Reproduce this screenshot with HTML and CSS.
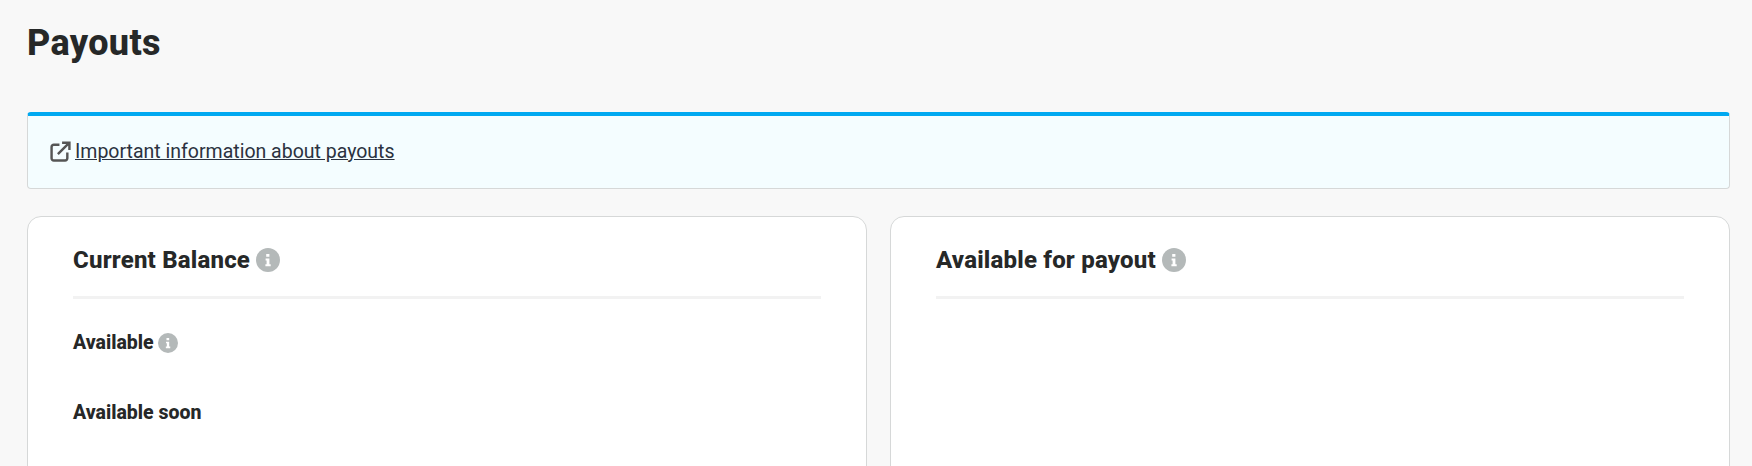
FILE: index.html
```html
<!DOCTYPE html>
<html lang="en">
<head>
    <meta charset="UTF-8">
    <meta name="viewport" content="width=device-width, initial-scale=1.0">
    <title>Payouts</title>
    <link rel="stylesheet" href="styles.css">
</head>
<body>
    <div class="page">
        <h1 class="page-title">Payouts</h1>
        <div class="notice">
            <svg class="external-icon" viewBox="0 0 20 20" width="21" height="21" fill="none" stroke="#555" stroke-width="2.3">
                <path d="M9 3.5H3.6A2.1 2.1 0 0 0 1.5 5.6v10.8a2.1 2.1 0 0 0 2.1 2.1h10.8a2.1 2.1 0 0 0 2.1-2.1V11"/>
                <path d="M7.5 12.5L18 2M11.5 1.6h7v7"/>
            </svg>
            <a class="notice-link" href="#">Important information about payouts</a>
        </div>
        <div class="cards">
            <section class="card">
                <div class="card-header">
                    <h2 class="card-title">Current Balance</h2>
                    <svg class="info-icon" viewBox="0 0 24 24" width="24" height="24">
                        <circle cx="12" cy="12" r="12" fill="#b4b9b9"/>
                        <path d="M10.2 6h3.2v2.8h-3.2zM9.6 10.4h3.8v5.8h1.3v2H9.4v-2h1.2v-3.8h-1z" fill="#fff"/>
                    </svg>
                </div>
                <div class="balance-row">
                    <span class="balance-label">Available</span>
                    <svg class="info-icon small" viewBox="0 0 24 24" width="20" height="20">
                        <circle cx="12" cy="12" r="12" fill="#b4b9b9"/>
                        <path d="M10.2 6h3.2v2.8h-3.2zM9.6 10.4h3.8v5.8h1.3v2H9.4v-2h1.2v-3.8h-1z" fill="#fff"/>
                    </svg>
                </div>
                <div class="balance-row">
                    <span class="balance-label">Available soon</span>
                </div>
            </section>
            <section class="card">
                <div class="card-header">
                    <h2 class="card-title">Available for payout</h2>
                    <svg class="info-icon" viewBox="0 0 24 24" width="24" height="24">
                        <circle cx="12" cy="12" r="12" fill="#b4b9b9"/>
                        <path d="M10.2 6h3.2v2.8h-3.2zM9.6 10.4h3.8v5.8h1.3v2H9.4v-2h1.2v-3.8h-1z" fill="#fff"/>
                    </svg>
                </div>
            </section>
        </div>
    </div>
</body>
</html>
```

FILE: styles.css
```css
html, body {
    height: 100%;
}

body {
    font-family: Roboto, "Liberation Sans", sans-serif;
    background-color: #f8f8f8;
    color: #262828;
    margin: 0;
    overflow: hidden;
}

.page {
    padding: 0 22px 0 27px;
    height: 466px;
    overflow: hidden;
}

.page-title {
    font-size: 36px;
    font-weight: 800;
    line-height: 42px;
    letter-spacing: 0.35px;
    margin: 0;
    padding: 22px 0 48px;
}

.notice {
    display: flex;
    align-items: center;
    gap: 4px;
    height: 77px;
    box-sizing: border-box;
    padding: 0 23px 1px 22px;
    background-color: #f4fdff;
    border: 1px solid #d6d8d8;
    border-top: 4px solid #00a9f1;
    border-radius: 4px;
}

.notice-link {
    color: #2b3240;
    font-size: 19.5px;
    line-height: 24px;
    text-decoration: underline;
}

.cards {
    display: grid;
    grid-template-columns: 1fr 1fr;
    gap: 23px;
    margin-top: 27px;
}

.card {
    background-color: #fff;
    border: 1px solid #d6d8d8;
    border-radius: 14px;
    padding: 0 45px;
    height: 300px;
}

.card-header {
    display: flex;
    align-items: center;
    gap: 6px;
    height: 73px;
    padding-top: 6px;
    border-bottom: 3px solid #f2f2f2;
}

.card-title {
    font-size: 24px;
    font-weight: 800;
    line-height: 30px;
    letter-spacing: 0.2px;
    margin: 0;
}

.balance-row {
    display: flex;
    align-items: center;
    gap: 4px;
    height: 24px;
    margin-top: 32px;
}

.balance-row + .balance-row {
    margin-top: 46px;
}

.balance-label {
    font-size: 19.5px;
    font-weight: 800;
    line-height: 24px;
}

.info-icon.small {
    margin-top: -1px;
}
```
